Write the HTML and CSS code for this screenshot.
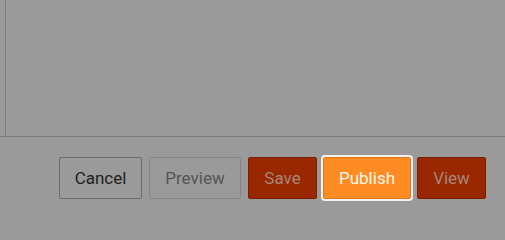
FILE: index.html
```html
<!DOCTYPE html>
<html lang="en">
<head>
<meta charset="utf-8">
<title>Editor actions</title>
<link rel="stylesheet" href="styles.css">
</head>
<body>
<div class="page">
  <div class="content">
    <div class="panel"></div>
  </div>
  <div class="footer">
    <button class="btn btn-cancel">Cancel</button>
    <button class="btn btn-preview">Preview</button>
    <button class="btn btn-dark btn-save">Save</button>
    <button class="btn btn-publish">Publish</button>
    <button class="btn btn-dark btn-view">View</button>
  </div>
</div>
</body>
</html>
```
FILE: styles.css
```css
html, body {
  margin: 0;
  padding: 0;
  background: #9a9a9a;
}
.page {
  width: 505px;
  height: 219px;
  display: flex;
  flex-direction: column;
  font-family: Roboto, "Liberation Sans", sans-serif;
}
.content {
  height: 136px;
  border-bottom: 1px solid #7d7d7d;
  display: flex;
}
.panel {
  margin-left: 5px;
  border-left: 1px solid #7d7d7d;
}
.footer {
  display: flex;
  justify-content: flex-end;
  gap: 6px;
  padding: 20px 19px 0 0;
}
.btn {
  height: 42px;
  box-sizing: border-box;
  border-radius: 2px;
  font-family: inherit;
  font-size: 17px;
  padding: 0;
  display: flex;
  align-items: center;
  justify-content: center;
  cursor: pointer;
}
.btn-cancel {
  width: 83px;
  margin-right: 1px;
  background: #9a9a9a;
  border: 1px solid #6c6c6c;
  color: #1e1e1e;
}
.btn-preview {
  width: 92px;
  margin-right: 1px;
  background: #9a9a9a;
  border: 1px solid #868686;
  color: #555555;
}
.btn-dark {
  width: 69px;
  background: #992700;
  border: 1px solid #7c1e00;
  color: #a6877a;
}
.btn-publish {
  width: 88px;
  background: #ff8c22;
  border: 1px solid #e5781a;
  color: #fff7ee;
  box-shadow: 0 0 0 2px #f2f2f2;
}
```
